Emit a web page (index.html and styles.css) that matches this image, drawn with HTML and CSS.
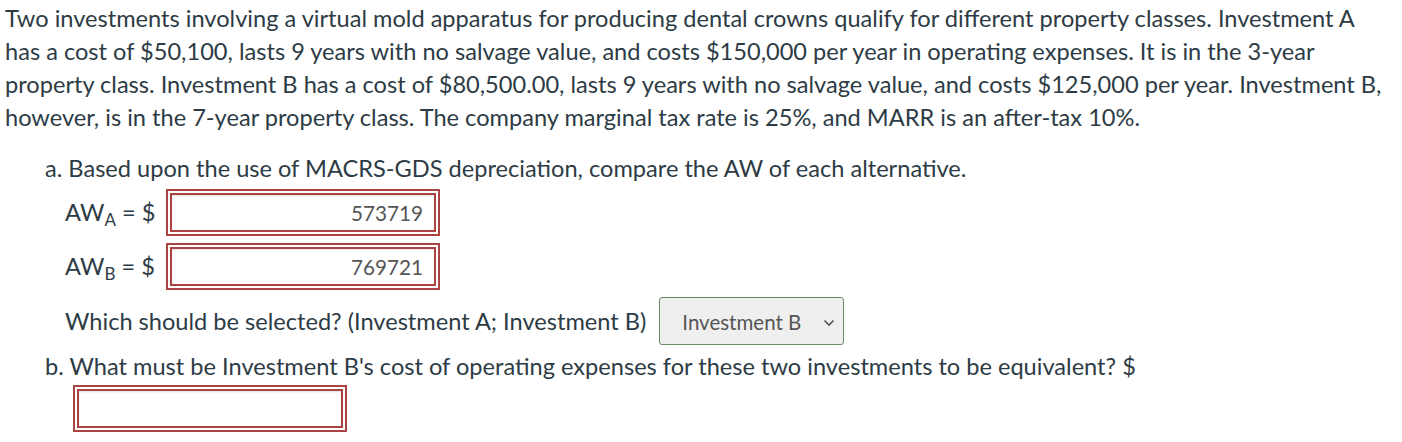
FILE: index.html
```html
<!DOCTYPE html>
<html lang="en">
<head>
<meta charset="utf-8">
<title>Question</title>
<link rel="stylesheet" href="styles.css">
</head>
<body>
<div class="question">
  <p class="stem">Two investments involving a virtual mold apparatus for producing dental crowns qualify for different property classes. Investment A has a cost of $50,100, lasts 9 years with no salvage value, and costs $150,000 per year in operating expenses. It is in the 3-year property class. Investment B has a cost of $80,500.00, lasts 9 years with no salvage value, and costs $125,000 per year. Investment B, however, is in the 7-year property class. The company marginal tax rate is 25%, and MARR is an after-tax 10%.</p>
  <div class="parts">
    <p class="part-title">a. Based upon the use of MACRS-GDS depreciation, compare the AW of each alternative.</p>
    <div class="answer-row row-a">
      <span class="label">AW<sub>A</sub> = $</span>
      <span class="box"><input class="field" type="text" value="573719"></span>
    </div>
    <div class="answer-row row-b">
      <span class="label">AW<sub>B</sub> = $</span>
      <span class="box"><input class="field" type="text" value="769721"></span>
    </div>
    <div class="select-row">
      <span class="which">Which should be selected? (Investment A; Investment B)</span>
      <span class="select">Investment B
        <svg class="chev" width="12" height="8" viewBox="0 0 12 8"><path d="M1.5 1.5 L6 6 L10.5 1.5" fill="none" stroke="#555" stroke-width="1.6"/></svg>
      </span>
    </div>
    <p class="part-title part-b">b. What must be Investment B's cost of operating expenses for these two investments to be equivalent? $</p>
    <div class="b-row">
      <span class="box"><input class="field" type="text" value=""></span>
    </div>
  </div>
</div>
</body>
</html>
```
FILE: styles.css
```css
html, body {
  margin: 0;
  padding: 0;
  background: #ffffff;
}
body {
  font-family: Lato, "Open Sans", sans-serif;
  color: #2d3b45;
  font-size: 23.6px;
  line-height: 33px;
}
.question {
  padding: 2px 12px 0 5px;
}
.stem {
  margin: 0;
}
.parts {
  padding-left: 40px;
  margin-top: 18px;
}
.part-title {
  margin: 0;
}
.answer-row {
  display: flex;
  align-items: center;
  padding-left: 20px;
  height: 54px;
}
.label {
  width: 101px;
  white-space: nowrap;
}
.label sub {
  font-size: 17px;
  line-height: 0;
  vertical-align: -5px;
}
.box {
  display: inline-flex;
  border: 2px solid #a94442;
  padding: 2px;
  background: #fff;
}
.field {
  width: 266px;
  height: 39px;
  box-sizing: border-box;
  border: 2px solid #a94442;
  margin: 0;
  padding: 2px 11px 0 8px;
  font-family: Lato, sans-serif;
  font-size: 20.7px;
  color: #555;
  text-align: right;
  box-shadow: inset 0 1px 2px rgba(0,0,0,0.12);
  outline: none;
}
.select-row {
  display: flex;
  align-items: center;
  padding-left: 20px;
  margin-top: 4px;
  height: 48px;
}
.which {
  margin-right: 13px;
}
.select {
  display: inline-flex;
  align-items: center;
  justify-content: space-between;
  box-sizing: border-box;
  width: 185px;
  height: 48px;
  padding: 3px 8px 0 22px;
  background: #efefef;
  border: 1px solid #6b8a6b;
  border-radius: 3px;
  font-size: 20.5px;
  color: #555;
}
.part-b {
  margin-top: 5px;
}
.b-row {
  padding-left: 28px;
  margin-top: 2px;
}
```
